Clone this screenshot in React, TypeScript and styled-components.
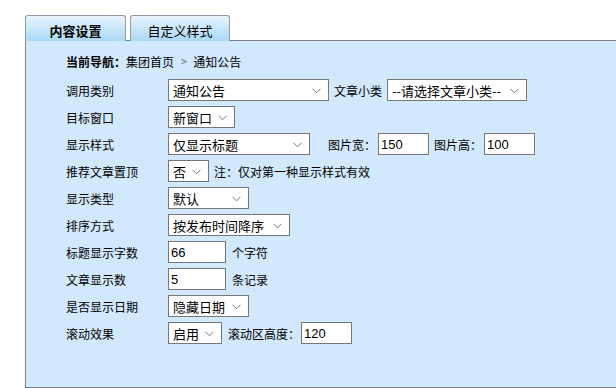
import React from "react";
import styled, { createGlobalStyle } from "styled-components";

const GlobalStyle = createGlobalStyle`
  html, body {
    margin: 0;
    padding: 0;
    background: #fff;
    overflow: hidden;
  }
  body {
    font-family: "Noto Sans CJK SC", "Liberation Sans", sans-serif;
    font-size: 12px;
    color: #000;
  }
`;

const Page = styled.div`
  padding: 15px 0 0 25px;
  width: 591px;
`;

const TabBar = styled.div`
  display: flex;
  gap: 4px;
  height: 25px;
`;

const Tab = styled.div<{ $active?: boolean }>`
  box-sizing: border-box;
  width: ${(p) => (p.$active ? 101 : 100)}px;
  height: 26px;
  border: 1px solid #8f9ba6;
  border-bottom: none;
  border-radius: 3px 3px 0 0;
  background: linear-gradient(#e8f4fd, #a9d9f6);
  display: flex;
  align-items: center;
  justify-content: center;
  font-size: 13px;
  font-weight: ${(p) => (p.$active ? 700 : 400)};
  padding-top: 4px;
`;

const Panel = styled.div`
  box-sizing: border-box;
  height: 348px;
  border: 1px solid #7f7f7f;
  border-right: none;
  background: #d2e8fc;
  padding: 11px 0 0 40px;
`;

const Nav = styled.div`
  display: flex;
  align-items: center;
  height: 18px;
  margin-bottom: 9px;
  b {
    font-weight: 700;
  }
`;

const Crumb = styled.span`
  color: #666;
  margin: 0 6px 0 7px;
  font-size: 11px;
`;

const Rows = styled.div`
  display: flex;
  flex-direction: column;
  gap: 5px;
`;

const Row = styled.div`
  display: flex;
  align-items: center;
  height: 22px;
`;

const Label = styled.div`
  width: 102px;
  flex: none;
`;

const Text = styled.span<{ $ml?: number; $mr?: number }>`
  margin-left: ${(p) => p.$ml ?? 5}px;
  margin-right: ${(p) => p.$mr ?? 0}px;
  white-space: nowrap;
`;

const SelectWrap = styled.div<{ $w: number }>`
  position: relative;
  box-sizing: border-box;
  width: ${(p) => p.$w}px;
  height: 22px;
  border: 1px solid #767676;
  background: #fff;
  flex: none;
`;

const SelectEl = styled.select`
  appearance: none;
  border: none;
  outline: none;
  background: transparent;
  width: 100%;
  height: 100%;
  padding: 0 0 0 4px;
  margin: 0;
  font-family: "Noto Sans CJK SC", sans-serif;
  font-size: 13px;
  color: #000;
`;

const Chevron = styled.svg`
  position: absolute;
  right: 7px;
  top: 8px;
  pointer-events: none;
`;

const Input = styled.input<{ $w: number }>`
  box-sizing: border-box;
  width: ${(p) => p.$w}px;
  height: 22px;
  border: 1px solid #767676;
  background: #fff;
  padding: 0 2px;
  margin: 0;
  font-family: "Liberation Sans", sans-serif;
  font-size: 13px;
  color: #000;
  outline: none;
  flex: none;
`;

const Select: React.FC<{ w: number; value: string }> = ({ w, value }) => (
  <SelectWrap $w={w}>
    <SelectEl defaultValue={value}>
      <option>{value}</option>
    </SelectEl>
    <Chevron width="9" height="6" viewBox="0 0 9 6">
      <path d="M0.5 0.8 L4.5 4.8 L8.5 0.8" fill="none" stroke="#707070" strokeWidth="1" />
    </Chevron>
  </SelectWrap>
);

export default function App() {
  return (
    <>
      <GlobalStyle />
      <Page>
        <TabBar>
          <Tab $active>内容设置</Tab>
          <Tab>自定义样式</Tab>
        </TabBar>
        <Panel>
          <Nav>
            <b>当前导航：</b>
            <span>集团首页</span>
            <Crumb>&gt;</Crumb>
            <span>通知公告</span>
          </Nav>
          <Rows>
            <Row>
              <Label>调用类别</Label>
              <Select w={161} value="通知公告" />
              <Text $mr={5}>文章小类</Text>
              <Select w={140} value="--请选择文章小类--" />
            </Row>
            <Row>
              <Label>目标窗口</Label>
              <Select w={67} value="新窗口" />
            </Row>
            <Row>
              <Label>显示样式</Label>
              <Select w={142} value="仅显示标题" />
              <Text $ml={18} $mr={2}>图片宽：</Text>
              <Input $w={51} defaultValue="150" />
              <Text $mr={2}>图片高：</Text>
              <Input $w={51} defaultValue="100" />
            </Row>
            <Row>
              <Label>推荐文章置顶</Label>
              <Select w={41} value="否" />
              <Text>注：仅对第一种显示样式有效</Text>
            </Row>
            <Row>
              <Label>显示类型</Label>
              <Select w={81} value="默认" />
            </Row>
            <Row>
              <Label>排序方式</Label>
              <Select w={122} value="按发布时间降序" />
            </Row>
            <Row>
              <Label>标题显示字数</Label>
              <Input $w={58} defaultValue="66" />
              <Text $ml={6}>个字符</Text>
            </Row>
            <Row>
              <Label>文章显示数</Label>
              <Input $w={58} defaultValue="5" />
              <Text $ml={6}>条记录</Text>
            </Row>
            <Row>
              <Label>是否显示日期</Label>
              <Select w={81} value="隐藏日期" />
            </Row>
            <Row>
              <Label>滚动效果</Label>
              <Select w={54} value="启用" />
              <Text $ml={6} $mr={1}>滚动区高度：</Text>
              <Input $w={51} defaultValue="120" />
            </Row>
          </Rows>
        </Panel>
      </Page>
    </>
  );
}
